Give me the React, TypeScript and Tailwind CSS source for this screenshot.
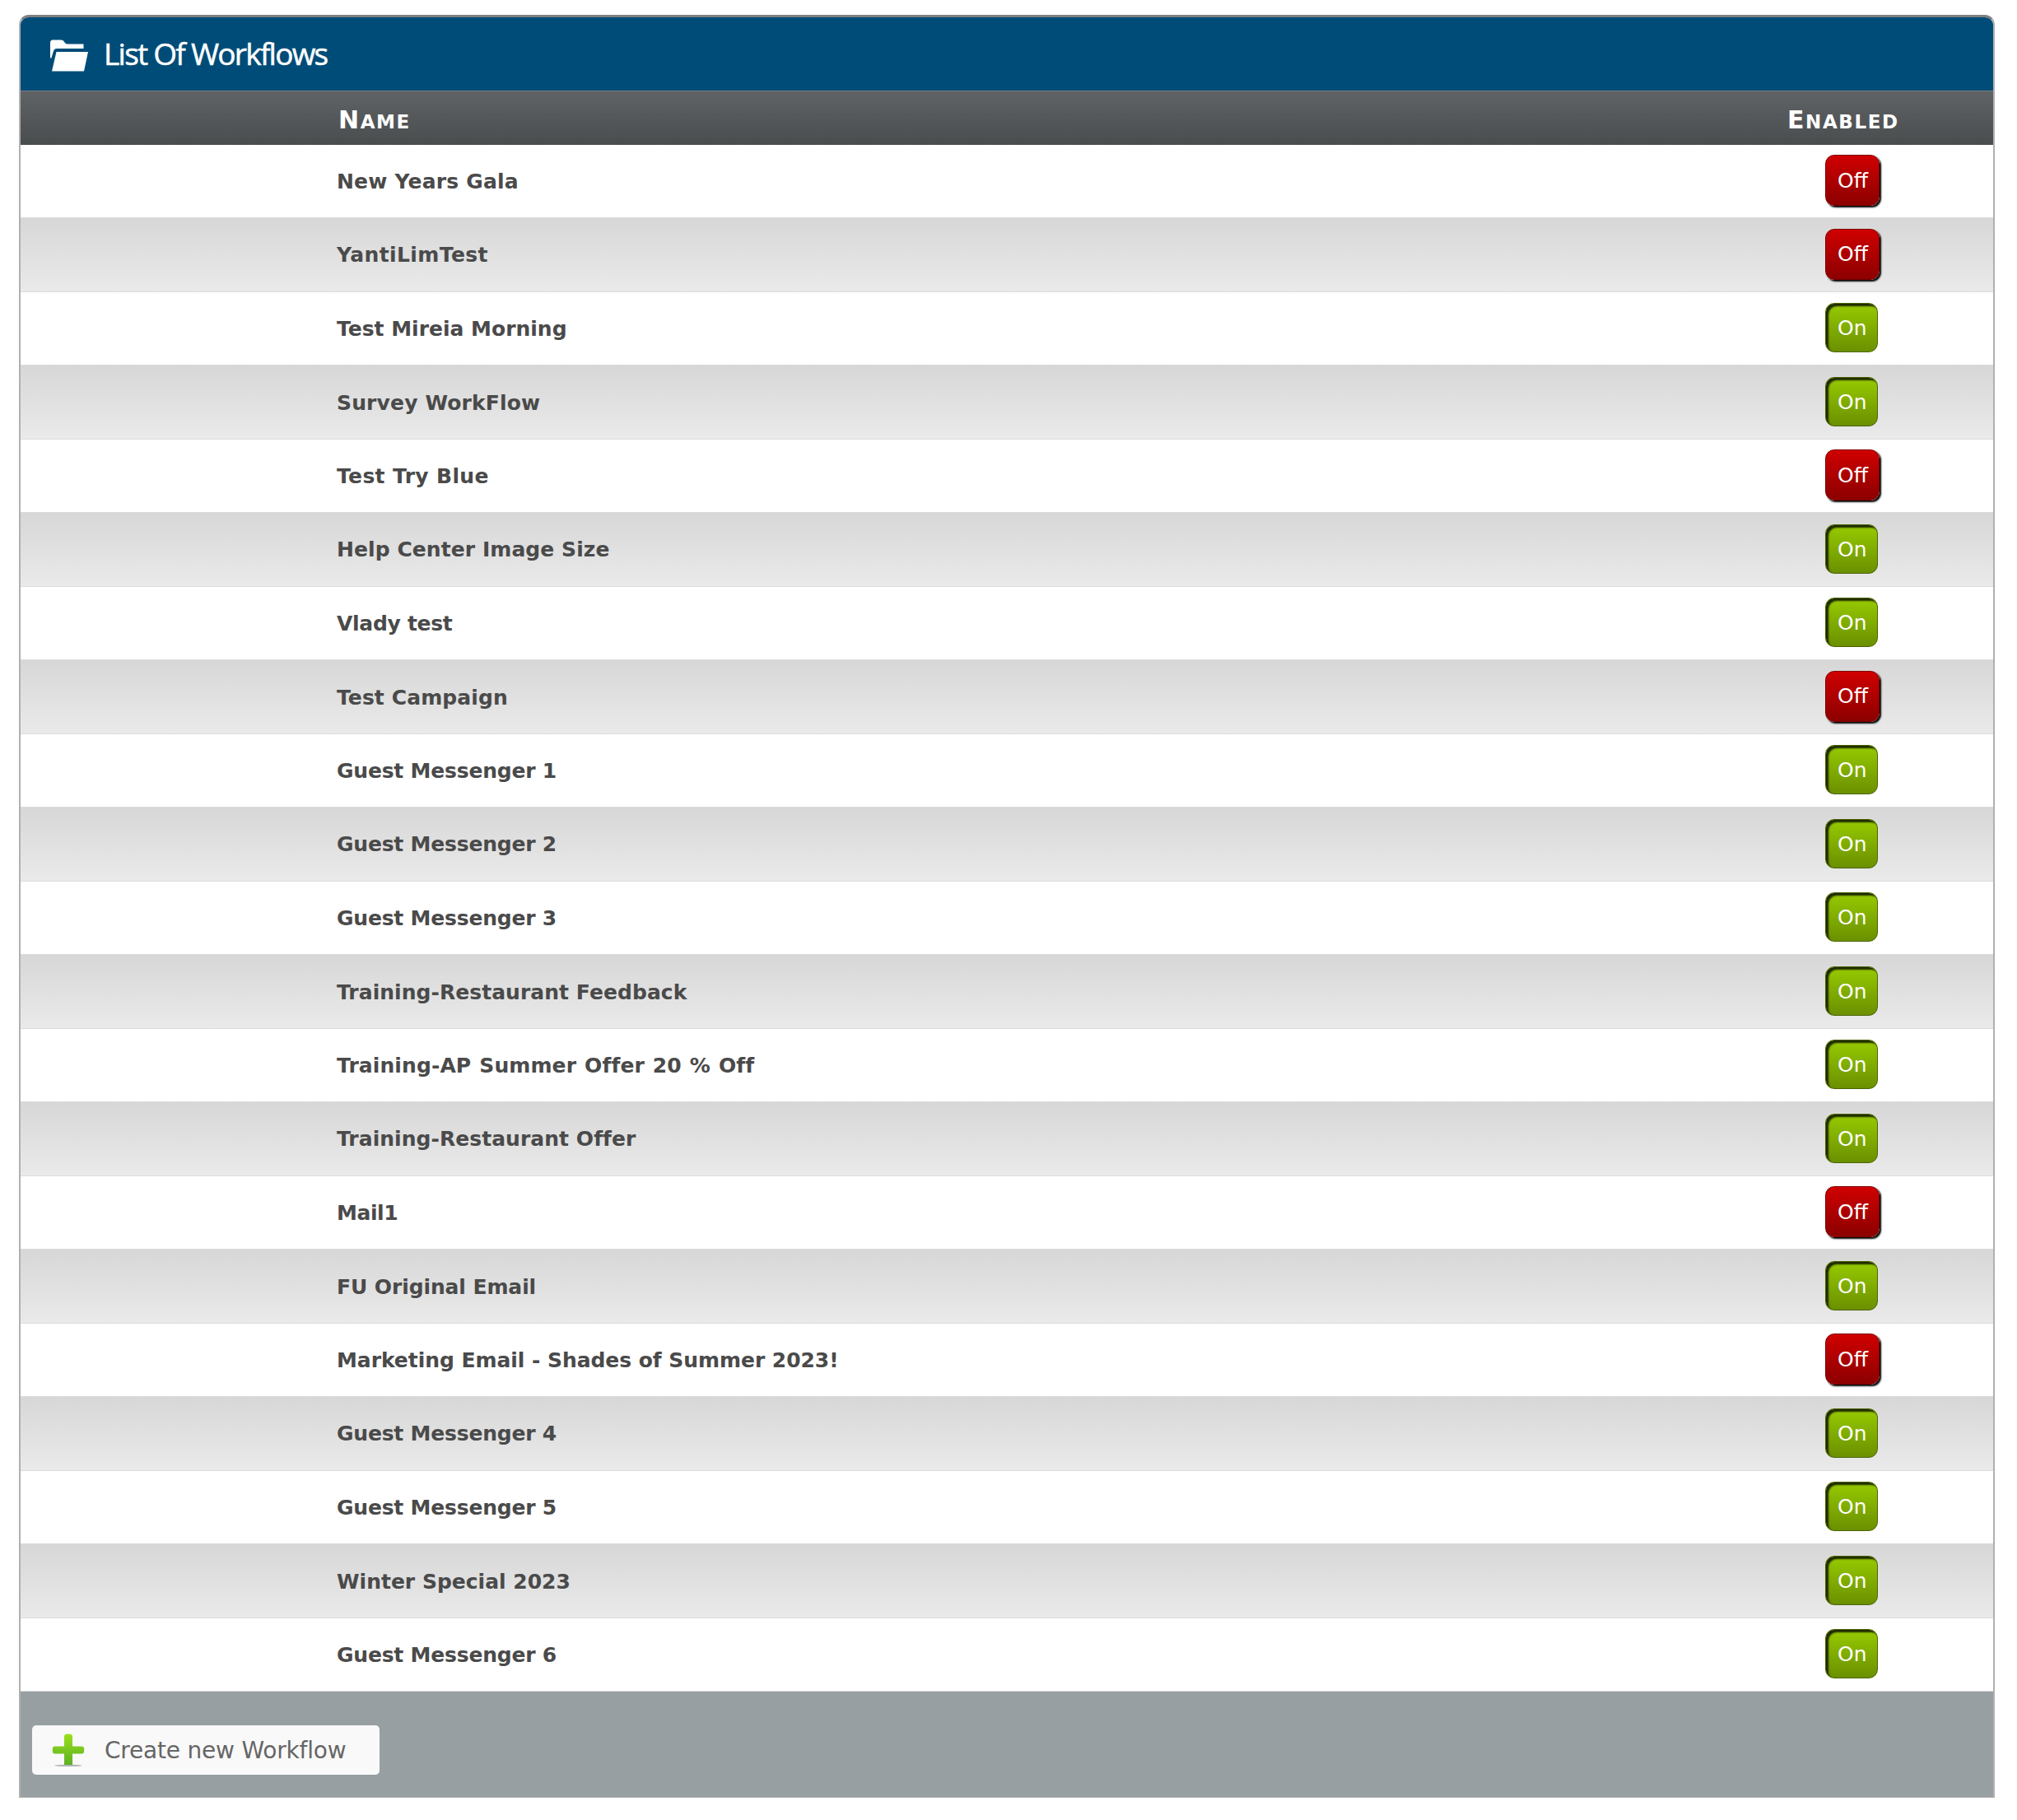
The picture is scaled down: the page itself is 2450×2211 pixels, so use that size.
type Workflow = { name: string; enabled: boolean; tracking?: string };

const workflows: Workflow[] = [
  { name: 'New Years Gala', enabled: false, tracking: 'tracking-[0.2px]' },
  { name: 'YantiLimTest', enabled: false, tracking: 'tracking-[0.4px]' },
  { name: 'Test Mireia Morning', enabled: true },
  { name: 'Survey WorkFlow', enabled: true, tracking: 'tracking-[0.15px]' },
  { name: 'Test Try Blue', enabled: false, tracking: 'tracking-[0.35px]' },
  { name: 'Help Center Image Size', enabled: true, tracking: 'tracking-[0.07px]' },
  { name: 'Vlady test', enabled: true, tracking: 'tracking-[-0.3px]' },
  { name: 'Test Campaign', enabled: false, tracking: 'tracking-[0.1px]' },
  { name: 'Guest Messenger 1', enabled: true, tracking: 'tracking-[-0.2px]' },
  { name: 'Guest Messenger 2', enabled: true, tracking: 'tracking-[-0.2px]' },
  { name: 'Guest Messenger 3', enabled: true, tracking: 'tracking-[-0.2px]' },
  { name: 'Training-Restaurant Feedback', enabled: true, tracking: 'tracking-[0.05px]' },
  { name: 'Training-AP Summer Offer 20 % Off', enabled: true, tracking: 'tracking-[0.1px] [word-spacing:1.2px]' },
  { name: 'Training-Restaurant Offer', enabled: true, tracking: 'tracking-[0.05px]' },
  { name: 'Mail1', enabled: false, tracking: 'tracking-[-0.4px]' },
  { name: 'FU Original Email', enabled: true, tracking: 'tracking-[-0.1px]' },
  { name: 'Marketing Email - Shades of Summer 2023!', enabled: false, tracking: 'tracking-[-0.05px]' },
  { name: 'Guest Messenger 4', enabled: true, tracking: 'tracking-[-0.2px]' },
  { name: 'Guest Messenger 5', enabled: true, tracking: 'tracking-[-0.2px]' },
  { name: 'Winter Special 2023', enabled: true },
  { name: 'Guest Messenger 6', enabled: true, tracking: 'tracking-[-0.2px]' },
];

function FolderIcon() {
  return (
    <svg className="h-[44px] w-[48px]" viewBox="0 0 48 44" fill="#fff">
      <path d="M1 27V9Q1 5.500 4 5.500H14Q17 5.500 18.500 8.500Q19.500 10.500 22 10.500H41.500V16H9Q6 16 5 19L2.200 28Z" />
      <path d="M8.500 20H47L42 43.500H3Z" />
    </svg>
  );
}

function PlusIcon() {
  return (
    <svg className="h-[42px] w-[40px]" viewBox="0 0 40 42">
      <defs>
        <linearGradient id="plus" x1="0" y1="0" x2="0" y2="1">
          <stop offset="0" stopColor="#9be01c" />
          <stop offset="1" stopColor="#5cb024" />
        </linearGradient>
      </defs>
      <ellipse cx="20" cy="39.800" rx="17" ry="1.200" fill="#b5b5b5" />
      <path
        d="M18.500 1.500h3q3.500 0 3.500 3.500v11.500h11q3.200 0 3.200 3.200v2.600q0 3.200-3.200 3.200H25V39H15V25.500H4q-3.200 0-3.200-3.200v-2.600q0-3.200 3.200-3.200h11V5q0-3.500 3.500-3.500Z"
        fill="url(#plus)"
      />
    </svg>
  );
}

function Toggle({ enabled }: { enabled: boolean }) {
  return enabled ? (
    <button className="mt-px flex h-[60px] w-[64px] rounded-[11px] border border-[#4b6500] bg-linear-to-b from-[#97cb00] to-[#6b9000] pt-[10px] pl-[14px] text-[25px] leading-[40px] text-white shadow-[inset_3px_3px_2px_#1e2900]">
      On
    </button>
  ) : (
    <button className="flex h-[62px] w-[66px] rounded-[11px] border border-[#7d0000] bg-linear-to-b from-[#d00000] to-[#8c0000] pt-[10.5px] pl-[14px] text-[25px] leading-[40px] text-white shadow-[2px_2px_2px_#000]">
      Off
    </button>
  );
}

export default function App() {
  return (
    <div className="h-[2211px] w-[2450px] bg-white pt-[18px] pl-[23px] font-['DejaVu_Sans',sans-serif]">
      <div className="flex h-[2166px] w-[2400px] flex-col overflow-hidden rounded-t-[12px] border-x-2 border-t-[3px] border-b border-[#b0b0b0] border-t-[#808080]">
        <header className="flex h-[89px] shrink-0 items-center bg-[#004c78] pb-[2px] pl-[35px]">
          <FolderIcon />
          <h1 className="ml-[18px] font-['Open_Sans',sans-serif] text-[37px] tracking-[-1.75px] text-white [-webkit-text-stroke:0.5px_white]">
            List Of Workflows
          </h1>
        </header>
        <div className="grid h-[65.5px] shrink-0 grid-cols-[386px_1fr_250px] items-center border-t border-[#7a7d80] bg-linear-to-b from-[#5f6366] to-[#4a4d4e] pt-[5px] text-[23px] font-bold tracking-[1.6px] text-white uppercase">
          <span />
          <span className="first-letter:text-[30px]">Name</span>
          <span className="first-letter:text-[30px]">Enabled</span>
        </div>
        {workflows.map(({ name, enabled, tracking = '' }, i) => (
          <div
            key={name}
            className="grid h-[89.5px] shrink-0 grid-cols-[384px_1fr_227px] border-b border-[#dcdcdc] odd:bg-white even:bg-linear-to-b even:from-[#d7d7d7] even:to-[#eaeaea]"
          >
            <span />
            <span
              className={`${i % 4 === 1 ? 'pt-[24.5px]' : 'pt-[25.5px]'} text-[25px] leading-[40px] font-bold whitespace-nowrap text-[#4a4a4a] ${tracking}`}
            >
              {name}
            </span>
            <div className="pt-[12.5px] pl-[23px]">
              <Toggle enabled={enabled} />
            </div>
          </div>
        ))}
        <footer className="flex-1 bg-[#979fa2] pt-[41px] pl-[14px]">
          <button className="flex h-[60px] w-[422px] items-center rounded-[5px] bg-[#f9f9f9] pl-[24px] text-[28px] text-[#666]">
            <PlusIcon />
            <span className="ml-[24px] pt-px tracking-[-0.2px] whitespace-nowrap">Create new Workflow</span>
          </button>
        </footer>
      </div>
    </div>
  );
}
